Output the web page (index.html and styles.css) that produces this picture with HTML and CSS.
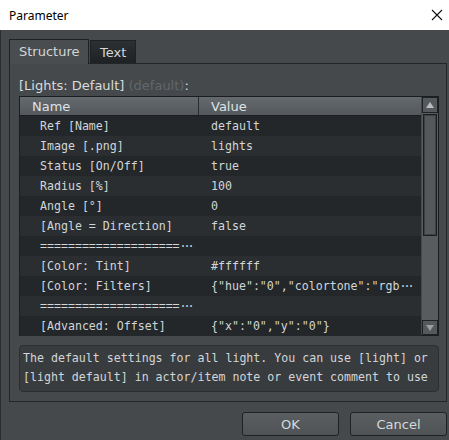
FILE: index.html
```html
<!DOCTYPE html>
<html lang="en">
<head>
  <meta charset="UTF-8">
  <title>Parameter</title>
  <link rel="stylesheet" href="styles.css">
</head>
<body>
  <div class="titlebar">
    <span class="title">Parameter</span>
    <svg class="close" width="12" height="12" viewBox="0 0 12 12">
      <path d="M1 1 L11 11 M11 1 L1 11" stroke="#111" stroke-width="1.1" fill="none"/>
    </svg>
  </div>

  <div class="window">
    <div class="tabs">
      <div class="tab active">Structure</div>
      <div class="tab">Text</div>
    </div>

    <div class="panel">
      <div class="caption">[Lights: Default] <span class="dim">(default)</span>:</div>

      <div class="table">
        <div class="grid">
          <div class="row head">
            <div class="col name">Name</div>
            <div class="col value">Value</div>
          </div>
          <div class="row"><div class="col name">Ref [Name]</div><div class="col value">default</div></div>
          <div class="row"><div class="col name">Image [.png]</div><div class="col value">lights</div></div>
          <div class="row"><div class="col name">Status [On/Off]</div><div class="col value">true</div></div>
          <div class="row"><div class="col name">Radius [%]</div><div class="col value">100</div></div>
          <div class="row"><div class="col name">Angle [°]</div><div class="col value">0</div></div>
          <div class="row"><div class="col name">[Angle = Direction]</div><div class="col value">false</div></div>
          <div class="row"><div class="col name">====================<span class="ell">···</span></div><div class="col value"></div></div>
          <div class="row"><div class="col name">[Color: Tint]</div><div class="col value">#ffffff</div></div>
          <div class="row"><div class="col name">[Color: Filters]</div><div class="col value">{"hue":"0","colortone":"rgb<span class="ell">···</span></div></div>
          <div class="row"><div class="col name">====================<span class="ell">···</span></div><div class="col value"></div></div>
          <div class="row"><div class="col name">[Advanced: Offset]</div><div class="col value">{"x":"0","y":"0"}</div></div>
        </div>

        <div class="scrollbar">
          <div class="arrow up"></div>
          <div class="track"><div class="thumb"></div></div>
          <div class="arrow down"></div>
        </div>
      </div>

      <div class="desc">The default settings for all light. You can use [light] or
[light default] in actor/item note or event comment to use</div>
    </div>

    <div class="buttons">
      <button class="btn">OK</button>
      <button class="btn">Cancel</button>
    </div>
  </div>
</body>
</html>
```

FILE: styles.css
```css
body { margin: 0; width: 449px; height: 440px; overflow: hidden; background: #45494c; font-family: "DejaVu Sans", sans-serif; color: #d6dadd; }

.titlebar { height: 30px; background: #fff; display: flex; align-items: center; justify-content: space-between; padding: 0 6px 0 9px; }
.title { font-family: "Noto Sans", sans-serif; font-size: 12px; color: #000; }
.close { display: block; }

.window { height: 410px; border-left: 1px solid #2a2d30; padding: 9px 0 0 8px; box-sizing: border-box; }

/* tabs */
.tabs { display: flex; height: 24px; }
.tab { font-size: 13px; line-height: 23px; padding: 0 9px; border: 1px solid #1f2225; border-bottom: none; background: linear-gradient(#2c3033, #1f2225); color: #d2d6d9; margin-left: 1px; margin-top: 1px; height: 23px; box-sizing: border-box; }
.tab.active { background: #494d50; margin-left: 0; margin-top: 0; height: 25px; margin-bottom: -1px; position: relative; z-index: 1; padding: 0 9px 0 9px; width: 80px; }

.panel { width: 438px; border: 1px solid #232629; box-sizing: border-box; padding: 13px 7px 9px 9px; }
.caption { font-size: 13px; line-height: 18px; margin-bottom: 1px; color: #d8dcdf; }
.caption .dim { color: #62666a; }

/* property table */
.table { display: flex; border: 1px solid #1b1e20; height: 240px; box-sizing: border-box; }
.grid { width: 402px; background: #26292c; }
.row { display: flex; height: 20px; font-family: "DejaVu Sans Mono", monospace; font-size: 11.6px; line-height: 21px; color: #d2d6d9; white-space: pre; overflow: hidden; }
.row:nth-child(even) { background: #23272a; }
.row:nth-child(odd) { background: #2a2e31; }
.col.name { width: 179px; padding-left: 20px; box-sizing: border-box; }
.col.value { padding-left: 12px; }
.ell { letter-spacing: -3px; }
.row.head { height: 19px; line-height: 19px; font-family: "DejaVu Sans", sans-serif; font-size: 13px; background: linear-gradient(#656a6e, #54585c); border-bottom: 1px solid #1b1e20; color: #dfe3e6; box-sizing: border-box; }
.row.head .col.name { padding-left: 12px; border-right: 1px solid #2a2d30; }

.scrollbar { width: 16px; margin-left: 1px; display: flex; flex-direction: column; background: #4b4f52; }
.arrow { height: 16px; background: #55595c; border: 1px solid #1f2225; box-sizing: border-box; position: relative; }
.arrow::after { content: ""; position: absolute; left: 3px; border-left: 4px solid transparent; border-right: 4px solid transparent; }
.arrow.up::after { top: 4px; border-bottom: 6px solid #b9bdc0; }
.arrow.down { height: 15px; }
.arrow.down::after { top: 4px; border-top: 6px solid #9a9ea1; }
.track { flex: 1; background: #585c5f; padding: 1px; }
.thumb { height: 122px; background: #54585b; border: 1px solid #1c1f21; box-shadow: inset 0 0 0 1px #3d4043; box-sizing: border-box; }

.desc { margin-top: 9px; height: 47px; box-sizing: border-box; border: 1px solid #2c2f32; border-radius: 4px; background: #393c3f; padding: 3px 3px; font-family: "DejaVu Sans Mono", monospace; font-size: 11.6px; line-height: 19px; color: #d2d6d9; white-space: pre; overflow: hidden; }

/* dialog buttons */
.buttons { display: flex; justify-content: flex-end; gap: 11px; margin-top: 10px; padding-right: 2px; }
.btn { width: 97px; height: 24px; font-family: "DejaVu Sans", sans-serif; font-size: 13px; color: #d6dadd; background: linear-gradient(#5a5e61, #4f5356); border: 1px solid #1f2225; border-radius: 3px; padding: 0; }
```
